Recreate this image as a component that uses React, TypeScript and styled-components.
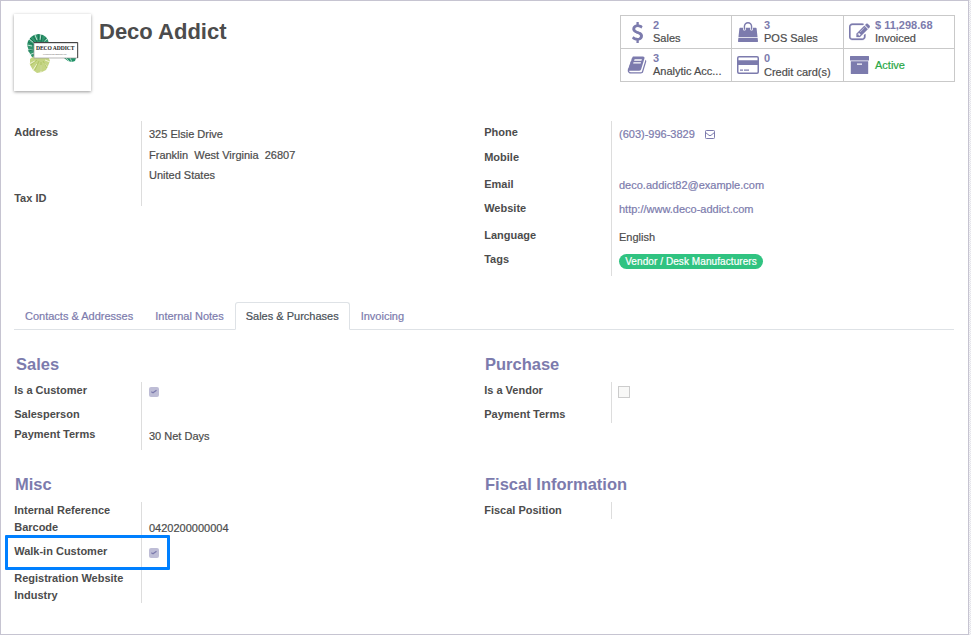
import React from 'react';
import styled, { createGlobalStyle } from 'styled-components';

const GlobalStyle = createGlobalStyle`
  * { box-sizing: border-box; }
  body {
    margin: 0;
    background: repeating-conic-gradient(#e4e4ea 0 25%, #f6f6f8 0 50%) 0 0 / 2px 2px;
    font: 11px/16px "Liberation Sans", Arial, sans-serif;
    color: #4c4c4c;
    overflow: hidden;
  }
`;

const Sheet = styled.main`
  width: 969px;
  height: 635px;
  padding: 13px 14px 0 13px;
  border: 1px solid #c6c4d1;
  background: #fff;
`;

const Header = styled.header`
  display: flex;
  align-items: flex-start;
  height: 107px;
  margin-right: -1px;
`;

const Avatar = styled.div`
  width: 77px;
  height: 77px;
  background: #fff;
  box-shadow: 0 1px 3px rgba(0, 0, 0, 0.4);
  svg { display: block; }
`;

const Name = styled.h1`
  flex: 1;
  margin: 5px 0 0 8px;
  font-size: 22px;
  line-height: 26px;
  color: #4c4c4c;
`;

const StatGrid = styled.div`
  display: grid;
  grid-template-columns: 111px 112px 111px;
  grid-template-rows: 33px 33px;
  margin-top: 1px;
  border: solid #c9c9c9;
  border-width: 1px 0 0 1px;
  width: 335px;
`;

const StatButton = styled.div`
  display: flex;
  align-items: center;
  border: solid #c9c9c9;
  border-width: 0 1px 1px 0;
  min-width: 0;
`;

const StatIcon = styled.div<{ $width: number }>`
  flex: 0 0 ${p => p.$width}px;
  display: flex;
  justify-content: center;
  color: #7c7bad;
  svg { display: block; fill: currentColor; }
`;

const StatText = styled.div`
  line-height: 13px;
  white-space: nowrap;
  -webkit-text-stroke: 0.2px;
`;

const StatValue = styled.div<{ $gap: number }>`
  font-weight: bold;
  color: #7c7bad;
  line-height: 13px;
  padding-bottom: ${p => p.$gap}px;
  -webkit-text-stroke: 0;
`;

const StatActive = styled.div`
  color: #28a745;
`;

const Columns = styled.section<{ $height: number }>`
  display: grid;
  grid-template-columns: 470px 1fr;
  height: ${p => p.$height}px;
`;

const GroupTitle = styled.h2<{ $indent: number }>`
  margin: 0;
  padding: 0 0 8px ${p => p.$indent}px;
  font-size: 16.5px;
  line-height: 20px;
  color: #7c7bad;
`;

const Row = styled.div<{ $height: number }>`
  position: relative;
  display: grid;
  grid-template-columns: 127px 1fr;
  height: ${p => p.$height}px;
`;

const Label = styled.div<{ $lead: number }>`
  padding: ${p => p.$lead}px 0 0 0.2px;
  font-weight: bold;
  white-space: nowrap;
`;

const Value = styled.div<{ $lead: number; $link?: boolean }>`
  padding: ${p => p.$lead}px 0 0 7px;
  border-left: 1px solid #ddd;
  white-space: pre;
  color: ${p => (p.$link ? '#7c7bad' : '#4c4c4c')};
  -webkit-text-stroke: 0.2px;
`;

const AddressLine = styled.div<{ $height: number }>`
  height: ${p => p.$height}px;
`;

const PhoneLine = styled.div`
  display: flex;
  align-items: center;
  gap: 10px;
`;

const Tag = styled.span`
  display: block;
  width: 144px;
  height: 15px;
  border-radius: 8px;
  background: #30c381;
  color: #fff;
  font-size: 10px;
  line-height: 15px;
  letter-spacing: 0.08px;
  text-align: center;
`;

const CheckedBox = styled.span`
  display: block;
  width: 10px;
  height: 10px;
  margin-top: 3px;
  border-radius: 2px;
  background: #bebdd6;
  svg { display: block; }
`;

const EmptyBox = styled.span`
  display: block;
  width: 12px;
  height: 12px;
  margin: 2px 0 0 -1px;
  border: 1px solid #ccc;
  background: #f8f8f7;
`;

const Highlight = styled.div`
  position: absolute;
  left: -9px;
  top: -8px;
  width: 165px;
  height: 35px;
  border: 3px solid #0080ff;
  border-radius: 1px;
`;

const Tabs = styled.nav`
  display: flex;
  height: 28px;
  border-bottom: 1px solid #dee2e6;
  margin-bottom: 24px;
`;

const Tab = styled.div<{ $active?: boolean }>`
  height: 28px;
  padding: 5px 10px 0;
  border: 1px solid ${p => (p.$active ? '#dee2e6' : 'transparent')};
  border-bottom-color: ${p => (p.$active ? '#fff' : 'transparent')};
  border-radius: 3px 3px 0 0;
  color: ${p => (p.$active ? '#495057' : '#7c7bad')};
  white-space: nowrap;
  -webkit-text-stroke: 0.2px;
`;

const DollarIcon = () => (
  <svg width="21" height="21" viewBox="0 0 1792 1792"><path d="M1362 1185q0 153-99.5 263.5t-258.5 136.5v175q0 14-9 23t-23 9h-135q-13 0-22.5-9.5t-9.5-22.5v-175q-66-9-127.5-31t-101.5-44.5-74-48-46.5-37.5-17.5-18q-17-21-2-41l103-135q7-10 23-12 15-2 24 9l2 2q113 99 243 125 37 8 74 8 81 0 142.5-43t61.5-122q0-28-15-53t-33.5-42-58.5-37.5-66-32-80-32.5q-39-16-61.5-25t-61.5-26.5-62.5-31-56.5-35.5-53.5-42.5-43.5-49-35.5-58-21-66.5-8.5-78q0-138 98-242t255-134v-180q0-13 9.5-22.5t22.5-9.5h135q14 0 23 9t9 23v176q57 6 110.5 23t87 33.5 63.5 37.5 39 29 15 14q17 18 5 38l-81 146q-8 15-23 16-14 3-27-7-3-3-14.5-12t-39-26.5-58.5-32-74.5-26-85.5-11.5q-95 0-155 43t-60 111q0 26 8.5 48t29.5 41.5 39.5 33 56 31 60.5 27 70 27.5q53 20 81 31.5t76 35 75.5 42.5 62 50 53 63.5 31.5 76.5 13 94z" /></svg>
);

const BagIcon = () => (
  <svg width="20" height="20" viewBox="0 0 1792 1792"><path d="M1757 1408l35 313q3 28-16 50-19 21-48 21h-1664q-29 0-48-21-19-22-16-50l35-313h1722zm-93-839l86 775h-1708l86-775q3-24 21-40.5t43-16.5h256v128q0 53 37.5 90.5t90.5 37.5 90.5-37.5 37.5-90.5v-128h384v128q0 53 37.5 90.5t90.5 37.5 90.5-37.5 37.5-90.5v-128h256q25 0 43 16.5t21 40.5zm-384-185v256q0 26-19 45t-45 19-45-19-19-45v-256q0-106-75-181t-181-75-181 75-75 181v256q0 26-19 45t-45 19-45-19-19-45v-256q0-159 112.5-271.5t271.5-112.5 271.5 112.5 112.5 271.5z" /></svg>
);

const EditIcon = () => (
  <svg width="21" height="21" viewBox="0 0 1792 1792"><path stroke="currentColor" strokeWidth="24" d="M888 1184l116-116-152-152-116 116v56h96v96h56zm440-720q-16-16-33 1l-350 350q-17 17-1 33t33-1l350-350q17-17 1-33zm80 594v190q0 119-84.5 203.5t-203.5 84.5h-832q-119 0-203.5-84.5t-84.5-203.5v-832q0-119 84.5-203.5t203.5-84.5h832q63 0 117 25 15 7 18 23 3 17-9 29l-49 49q-14 14-32 8-23-6-45-6h-832q-66 0-113 47t-47 113v832q0 66 47 113t113 47h832q66 0 113-47t47-113v-126q0-13 9-22l64-64q15-15 35-7t20 29zm-96-738l288 288-672 672h-288v-288zm444 132l-92 92-288-288 92-92q28-28 68-28t68 28l152 152q28 28 28 68t-28 68z" /></svg>
);

const BookIcon = () => (
  <svg width="20" height="20" viewBox="0 0 1792 1792"><path d="M1703 478q40 57 18 129l-275 906q-19 64-76.5 107.5t-122.5 43.5h-923q-77 0-148.5-53.5t-99.5-131.5q-24-67-2-127 0-4 3-27t4-37q1-8-3-21.5t-3-19.5q2-11 8-21t16.5-23.5 16.5-23.5q23-38 45-91.5t30-91.5q3-10 .5-30t-.5-28q3-11 17-28t17-23q21-36 42-92t25-90q1-9-2.5-32t.5-28q4-13 22-30.5t22-22.5q19-26 42.5-84.5t27.5-96.5q1-8-3-25.5t-2-26.5q2-8 9-18t18-23 17-21q8-12 16.5-30.5t15-35 16-36 19.5-32 26.5-23.5 36-11.5 47.5 5.5l-1 3q38-9 51-9h761q74 0 114 56t18 130l-274 906q-36 119-71.5 153.5t-128.5 34.5h-869q-27 0-38 15-11 16-1 43 24 70 144 70h923q29 0 56-15.5t35-41.5l300-987q7-22 5-57 38 15 59 43zm-1064 2q-4 13 2 22.5t20 9.5h608q13 0 25.5-9.5t16.5-22.5l21-64q4-13-2-22.5t-20-9.5h-608q-13 0-25.5 9.5t-16.5 22.5zm-83 256q-4 13 2 22.5t20 9.5h608q13 0 25.5-9.5t16.5-22.5l21-64q4-13-2-22.5t-20-9.5h-608q-13 0-25.5 9.5t-16.5 22.5z" /></svg>
);

const CardIcon = () => (
  <svg width="22" height="18" viewBox="0 0 22 18">
    <path fillRule="evenodd" d="M2 0h18a2 2 0 0 1 2 2v14a2 2 0 0 1-2 2H2a2 2 0 0 1-2-2V2a2 2 0 0 1 2-2zM1.5 4.3h19V2a.6.6 0 0 0-.5-.5H2a.6.6 0 0 0-.5.5zM1.5 9v7a.6.6 0 0 0 .5.5h18a.6.6 0 0 0 .5-.5V9zM3 13.4h3v1.3H3zM7 13.4h5v1.3H7z" />
  </svg>
);

const ArchiveIcon = () => (
  <svg width="19" height="18" viewBox="0 0 19 18">
    <path fillRule="evenodd" d="M.5 0h18a.5.5 0 0 1 .5.5v4H0v-4A.5.5 0 0 1 .5 0zM.8 5.2h17.4v12.3a.5.5 0 0 1-.5.5H1.3a.5.5 0 0 1-.5-.5zM7 7.5v1.2h5V7.5z" />
  </svg>
);

const EnvelopeIcon = () => (
  <svg width="10" height="9" viewBox="0 0 10 9" fill="none" stroke="#7c7bad">
    <rect x=".5" y=".5" width="9" height="8" rx=".8" />
    <path d="M.7 2.6 4 5.3q1 .7 2 0L9.3 2.6" />
  </svg>
);

const CheckMark = () => (
  <svg width="10" height="10" viewBox="0 0 10 10" fill="none" stroke="#7c7bad" strokeWidth="1.3">
    <path d="M2.3 4.8 4 5.8l3.5-2.6" />
  </svg>
);

const Logo = () => (
  <svg width="77" height="77" viewBox="0 0 77 77">
    <path d="M14 27l3-4 3-2 5-1 4 1 3 2 2 3 1 4H21v14l-3-1-3-5-1-4-1-3z" fill="#31956d" />
    <path d="M13 31l5 1M15 25l5 4M21 21l2 5M27 20l-1 6M33 25l-4 3M13 36l6 0M15 41l5-2" stroke="#e6f5ee" strokeWidth=".8" />
    <path d="M14 28l6 3M16 24l5 5M19 22l4 6M24 20l1 7M28 21l-1 7M32 24l-3 4M14 37l5-1" stroke="#12714f" strokeWidth=".9" />
    <path d="M16 45l4-3h14l2 5-2 5-2 4-4 2-5 1-4-3-3-5z" fill="#c5d584" />
    <path d="M15 50l6-3M19 56l4-6M27 59l0-8M34 54l-4-5M36 48l-5-2" stroke="#f3f6df" strokeWidth=".9" />
    <path d="M17 51l6-5M21 56l4-9M27 57l0-9M33 54l-4-7" stroke="#a7bf58" strokeWidth=".7" />
    <path d="M50 44h12l-1 3-3 1-4-1z" fill="#229269" />
    <path d="M52 44l3 3M56 44l2 4" stroke="#c4e7d8" strokeWidth=".8" />
    <rect x="20" y="29" width="43.5" height="15" fill="#fff" stroke="#999" strokeWidth=".7" />
    <path d="M19.5 28.5h44.2V44" fill="none" stroke="#444" strokeWidth="1" />
    <text x="22" y="36.3" fontFamily="Liberation Serif, serif" fontWeight="bold" fontSize="5.6" textLength="38.5" fill="#222">DECO ADDICT</text>
    <text x="29" y="41.2" fontFamily="Liberation Sans, sans-serif" fontSize="2.2" textLength="24" fill="#777">FURNITURE DESIGN CO.</text>
  </svg>
);

interface FieldProps {
  label: string;
  height: number;
  lead?: number;
  drop?: number;
  link?: boolean;
  highlighted?: boolean;
  children?: React.ReactNode;
}

const Field = ({ label, height, lead = 0, drop = 2, link, highlighted, children }: FieldProps) => (
  <Row $height={height}>
    <Label $lead={lead}>{label}</Label>
    <Value $lead={lead + drop} $link={link}>{children}</Value>
    {highlighted && <Highlight />}
  </Row>
);

interface StatProps {
  icon: React.ReactNode;
  value?: string;
  label: string;
  gap?: number;
  iconWidth?: number;
}

const Stat = ({ icon, value, label, gap = 0, iconWidth = 32 }: StatProps) => (
  <StatButton>
    <StatIcon $width={iconWidth}>{icon}</StatIcon>
    <StatText>
      {value && <StatValue $gap={gap}>{value}</StatValue>}
      {value ? label : <StatActive>{label}</StatActive>}
    </StatText>
  </StatButton>
);

export default function App() {
  return (
    <>
      <GlobalStyle />
      <Sheet>
        <Header>
          <Avatar><Logo /></Avatar>
          <Name>Deco Addict</Name>
          <StatGrid>
            <Stat icon={<DollarIcon />} value="2" label="Sales" />
            <Stat icon={<BagIcon />} value="3" label="POS Sales" />
            <Stat icon={<EditIcon />} value="$ 11,298.68" label="Invoiced" iconWidth={31} />
            <Stat icon={<BookIcon />} value="3" label="Analytic Acc..." />
            <Stat icon={<CardIcon />} value="0" label="Credit card(s)" gap={1} />
            <Stat icon={<ArchiveIcon />} label="Active" iconWidth={31} />
          </StatGrid>
        </Header>

        <Columns $height={181}>
          <div>
            <Field label="Address" height={66} lead={3}>
              <AddressLine $height={21}>325 Elsie Drive</AddressLine>
              <AddressLine $height={20}>{'Franklin  West Virginia  26807'}</AddressLine>
              <AddressLine $height={20}>United States</AddressLine>
            </Field>
            <Field label="Tax ID" height={19} lead={3} />
          </div>
          <div>
            <Field label="Phone" height={25} lead={3} link>
              <PhoneLine>(603)-996-3829<EnvelopeIcon /></PhoneLine>
            </Field>
            <Field label="Mobile" height={27} lead={3} />
            <Field label="Email" height={24} lead={3} drop={1} link>deco.addict82@example.com</Field>
            <Field label="Website" height={27} lead={3} drop={1} link>http://www.deco-addict.com</Field>
            <Field label="Language" height={24} lead={3}>English</Field>
            <Field label="Tags" height={28} lead={3} drop={3}><Tag>Vendor / Desk Manufacturers</Tag></Field>
          </div>
        </Columns>

        <Tabs>
          <Tab>Contacts &amp; Addresses</Tab>
          <Tab>Internal Notes</Tab>
          <Tab $active>Sales &amp; Purchases</Tab>
          <Tab>Invoicing</Tab>
        </Tabs>

        <Columns $height={120}>
          <div>
            <GroupTitle $indent={2}>Sales</GroupTitle>
            <Field label="Is a Customer" height={24}><CheckedBox><CheckMark /></CheckedBox></Field>
            <Field label="Salesperson" height={20} />
            <Field label="Payment Terms" height={24}>30 Net Days</Field>
          </div>
          <div>
            <GroupTitle $indent={1}>Purchase</GroupTitle>
            <Field label="Is a Vendor" height={24}><EmptyBox /></Field>
            <Field label="Payment Terms" height={17} />
          </div>
        </Columns>

        <Columns $height={130}>
          <div>
            <GroupTitle $indent={1}>Misc</GroupTitle>
            <Field label="Internal Reference" height={17} />
            <Field label="Barcode" height={24} drop={1}>0420200000004</Field>
            <Field label="Walk-in Customer" height={27} highlighted><CheckedBox><CheckMark /></CheckedBox></Field>
            <Field label="Registration Website" height={17} />
            <Field label="Industry" height={16} />
          </div>
          <div>
            <GroupTitle $indent={1}>Fiscal Information</GroupTitle>
            <Field label="Fiscal Position" height={17} />
          </div>
        </Columns>
      </Sheet>
    </>
  );
}
